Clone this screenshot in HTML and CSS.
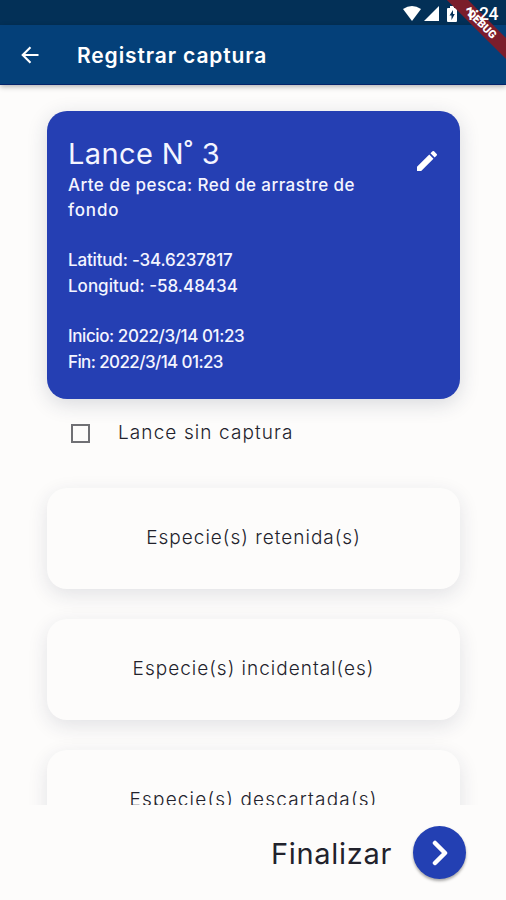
FILE: index.html
```html
<!DOCTYPE html>
<html lang="es">
<head>
<meta charset="utf-8">
<title>Registrar captura</title>
<link rel="stylesheet" href="styles.css">
</head>
<body>
<div class="app">
  <div class="status">
    <svg class="wifi" viewBox="0 0 18 15"><path d="M0 3Q9-3 18 3L9 15Z"/></svg>
    <svg class="signal" viewBox="0 0 15 15"><path d="M15 0V15H0Z"/></svg>
    <svg class="battery" viewBox="0 0 10 16"><path fill-rule="evenodd" d="M3 0H7V2H9Q10 2 10 3V15Q10 16 9 16H1Q0 16 0 15V3Q0 2 1 2H3ZM6 4L2.5 9.5H4.5V14L7.8 8H6Z"/></svg>
    <span class="clock">1:24</span>
  </div>
  <header class="bar">
    <svg class="back" viewBox="0 0 18 18"><path d="M17.5 9H2M9.5 1.2L1.7 9L9.5 16.8"/></svg>
    <h1 class="title">Registrar captura</h1>
  </header>
  <main class="content">
    <section class="lance">
      <div class="info">
        <h2 class="name">Lance N˚ 3</h2>
        <p class="line gear">Arte de pesca: Red de arrastre de</p>
        <p class="line bed">fondo</p>
        <p class="line lat gap">Latitud: -34.6237817</p>
        <p class="line lon">Longitud: -58.48434</p>
        <p class="line start gap">Inicio: 2022/3/14 01:23</p>
        <p class="line end">Fin: 2022/3/14 01:23</p>
      </div>
      <svg class="edit" viewBox="3 3 18 18"><path d="M3 17.25V21h3.75L17.81 9.94l-3.75-3.75L3 17.25zM20.71 7.04a1 1 0 0 0 0-1.41l-2.34-2.34a1 1 0 0 0-1.41 0l-1.83 1.83 3.75 3.75 1.83-1.83z"/></svg>
    </section>
    <label class="check"><span class="box"></span><span class="check-text">Lance sin captura</span></label>
    <div class="species"><span class="kept">Especie(s) retenida(s)</span></div>
    <div class="species"><span class="incidental">Especie(s) incidental(es)</span></div>
    <div class="species"><span class="discarded">Especie(s) descartada(s)</span></div>
  </main>
  <footer class="footer">
    <span class="finish">Finalizar</span>
    <span class="next"><svg viewBox="0 0 16 26"><path d="M3 3L13 13L3 23"/></svg></span>
  </footer>
  <div class="ribbon"><span>DEBUG</span></div>
</div>
</body>
</html>
```
FILE: styles.css
```css
* { box-sizing: border-box; }
body { margin: 0; font-family: Inter, "Open Sans", sans-serif; color: #22222c; }
h1, h2, p { margin: 0; }
.app { position: relative; width: 506px; height: 900px; overflow: hidden; display: flex; flex-direction: column; background: #fdfcfb; }
.status { flex: none; height: 25px; background: #033057; display: flex; align-items: center; padding: 2px 8px 0 403px; color: #fff; }
.status svg { fill: #fff; flex: none; }
.wifi { width: 18px; height: 15px; }
.signal { width: 15px; height: 15px; margin-left: 3px; }
.battery { width: 10px; height: 16px; margin-left: 8px; }
.clock { position: relative; z-index: 3; font: 500 17.5px Roboto, sans-serif; margin-left: 8px; letter-spacing: -0.3px; }
.bar { flex: none; height: 60px; background: #044079; border-bottom: 1px solid #04246a; display: flex; align-items: center; padding: 1px 0 0 21px; box-shadow: 0 2px 5px rgba(0,0,0,.28); z-index: 1; }
.back { width: 18px; height: 18px; fill: none; stroke: #fff; stroke-width: 2.1; }
.title { margin: 2px 0 0 38px; font-size: 21px; font-weight: 600; line-height: 28px; letter-spacing: 0.88px; color: #fff; white-space: nowrap; }
.content { flex: 1; min-height: 0; overflow: hidden; padding: 26px 46px 0 47px; }
.lance { height: 288px; border-radius: 20px; background: #253fb3; color: #f4f5ff; display: flex; padding: 25px 23px 0 21px; box-shadow: 0 5px 20px rgba(35,45,80,.17); }
.info { flex: 1; white-space: nowrap; }
.name { font-size: 29px; font-weight: 400; line-height: 36.6px; letter-spacing: 0.4px; }
.line { font-size: 17px; font-weight: 500; line-height: 25.3px; }
.gear { letter-spacing: 0.43px; }
.bed { letter-spacing: 0.8px; }
.lat { letter-spacing: -0.17px; }
.start { letter-spacing: -0.42px; }
.end { letter-spacing: -0.6px; }
.gap { margin-top: 25.3px; }
.edit { width: 20px; height: 20px; margin-top: 15px; fill: #fff; flex: none; }
.check { display: flex; align-items: center; height: 68px; padding-left: 24px; }
.box { width: 19px; height: 19px; border: 2px solid #707074; }
.check-text { margin: -2px 0 0 28px; font-size: 19px; font-weight: 300; letter-spacing: 1.1px; }
.species { height: 101px; margin-top: 30px; border-radius: 20px; background: #fdfcfb; box-shadow: 0 6px 20px rgba(35,45,70,.12); display: flex; align-items: center; justify-content: center; padding-bottom: 2px; font-size: 19px; font-weight: 300; letter-spacing: 1px; white-space: nowrap; }
.discarded { letter-spacing: 1.17px; }
.check + .species { margin-top: 21px; }
.footer { flex: none; height: 95px; display: flex; align-items: center; justify-content: flex-end; padding: 0 40px 0 0; }
.finish { font-size: 29px; font-weight: 400; letter-spacing: 0.7px; margin: 2px 21px 0 0; }
.next { width: 53px; height: 53px; border-radius: 50%; background: #2340b3; display: flex; align-items: center; justify-content: center; box-shadow: 0 2px 3px rgba(0,0,0,.35); }
.next svg { width: 16px; height: 26px; fill: none; stroke: #fff; stroke-width: 4.5; stroke-linecap: round; stroke-linejoin: round; }
.ribbon { position: absolute; right: -48px; top: 17px; width: 144px; height: 15px; background: #7b1d2b; transform: rotate(45deg); z-index: 2; color: #fff; font: 900 11px/15px Roboto, sans-serif; text-align: center; }
```
